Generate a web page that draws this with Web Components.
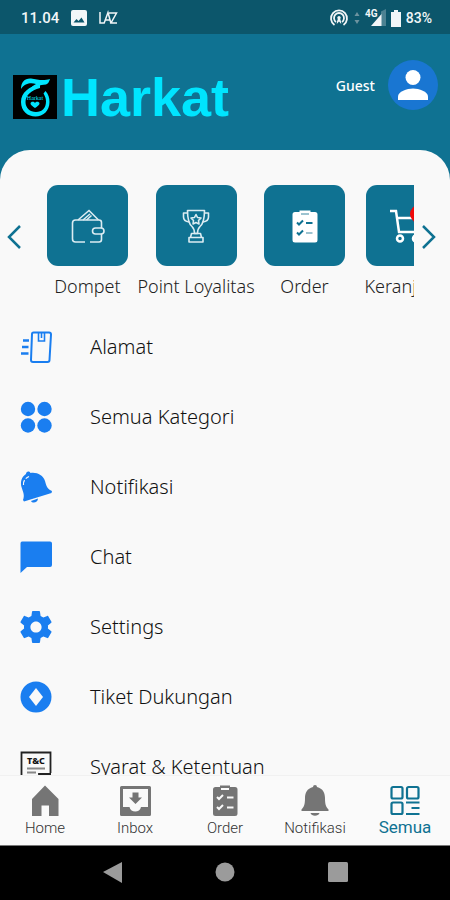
<!DOCTYPE html>
<html lang="id">
<head>
<meta charset="utf-8">
<meta name="viewport" content="width=device-width, initial-scale=1">
<title>Harkat</title>
<style>
  html, body {
    height: 100%;
    margin: 0;
  }
  body {
    font-family: "Noto Sans", "Open Sans", sans-serif;
    color: #222;
    background: #000;
  }
</style>
</head>
<body>

<harkat-app></harkat-app>

<template id="app-tpl">
  <style>
    :host {
      display: flex;
      flex-direction: column;
      height: 100vh;
      overflow: hidden;
      background: #0f7292;
    }
    main {
      flex: 1;
      min-height: 0;
      overflow: hidden;
      padding-top: 35px;
      border-radius: 30px 30px 0 0;
      background: #f9f9f9;
    }
    nav.list {
      display: flex;
      flex-direction: column;
      margin-top: 14px;
    }
  </style>
  <status-bar></status-bar>
  <app-header user="Guest">Harkat</app-header>
  <main>
    <tile-carousel>
      <tile-button icon="wallet">Dompet</tile-button>
      <tile-button icon="trophy">Point Loyalitas</tile-button>
      <tile-button icon="order">Order</tile-button>
      <tile-button icon="cart" badge>Keranjang</tile-button>
    </tile-carousel>
    <nav class="list">
      <menu-row icon="parcel">Alamat</menu-row>
      <menu-row icon="dots">Semua Kategori</menu-row>
      <menu-row icon="ring">Notifikasi</menu-row>
      <menu-row icon="chat">Chat</menu-row>
      <menu-row icon="gear">Settings</menu-row>
      <menu-row icon="ticket">Tiket Dukungan</menu-row>
      <menu-row icon="terms">Syarat &amp; Ketentuan</menu-row>
    </nav>
  </main>
  <tab-bar>
    <tab-item icon="home">Home</tab-item>
    <tab-item icon="inbox">Inbox</tab-item>
    <tab-item icon="tasks">Order</tab-item>
    <tab-item icon="bell">Notifikasi</tab-item>
    <tab-item icon="grid" active>Semua</tab-item>
  </tab-bar>
  <system-bar></system-bar>
</template>

<template id="status-tpl">
  <style>
    :host {
      display: flex;
      align-items: center;
      justify-content: space-between;
      box-sizing: border-box;
      height: 34px;
      padding: 2px 18px 0 21px;
      background: #0c566b;
      color: #f2f6f8;
      font: 500 15px Roboto, sans-serif;
    }
    div {
      display: flex;
      align-items: center;
    }
    .left { gap: 12px; }
    .right { gap: 5px; font-size: 14px; }
  </style>
  <div class="left">
    <span>11.04</span>
    <ui-icon name="image" size="16"></ui-icon>
    <ui-icon name="carrier" size="20"></ui-icon>
  </div>
  <div class="right">
    <ui-icon name="hotspot" size="18"></ui-icon>
    <ui-icon name="updown" size="8"></ui-icon>
    <ui-icon name="signal" size="20"></ui-icon>
    <ui-icon name="battery" size="10"></ui-icon>
    <span>83%</span>
  </div>
</template>

<template id="header-tpl">
  <style>
    :host {
      display: flex;
      align-items: center;
      justify-content: space-between;
      box-sizing: border-box;
      height: 116px;
      padding: 0 12px 14px 13px;
    }
    h1 {
      display: flex;
      align-items: center;
      gap: 4px;
      margin: 24px 0 0;
      color: #00e5ff;
      font: bold 54px/56px "Liberation Sans", Arial, sans-serif;
    }
    button {
      display: flex;
      align-items: center;
      gap: 13px;
      padding: 0;
      border: 0;
      background: none;
      color: #fff;
      font: 500 14px "Noto Sans", sans-serif;
    }
  </style>
  <h1><ui-icon name="logo" size="44"></ui-icon><slot></slot></h1>
  <button type="button"><span id="user"></span><ui-icon name="avatar" size="50"></ui-icon></button>
</template>

<template id="carousel-tpl">
  <style>
    :host {
      display: flex;
      align-items: center;
    }
    button {
      flex: none;
      width: 28px;
      height: 30px;
      margin-bottom: 8px;
      padding: 0;
      border: 0;
      background: none;
      color: #0f7292;
    }
    .prev { margin-right: 19px; }
    .next { margin-right: 8px; }
    .track {
      flex: 1;
      min-width: 0;
      display: grid;
      grid-template-columns: 81px 116px 81px 102px;
      gap: 10px;
      justify-items: center;
      overflow: hidden;
    }
  </style>
  <button class="prev" type="button" aria-label="Sebelumnya"><ui-icon name="prev" size="28"></ui-icon></button>
  <div class="track"><slot></slot></div>
  <button class="next" type="button" aria-label="Berikutnya"><ui-icon name="next" size="28"></ui-icon></button>
</template>

<template id="tile-tpl">
  <style>
    :host {
      display: block;
    }
    button {
      display: flex;
      flex-direction: column;
      align-items: center;
      gap: 8px;
      padding: 0;
      border: 0;
      background: none;
      color: #222;
      font: 300 18px/24px "Noto Sans", sans-serif;
      white-space: nowrap;
    }
    .box {
      position: relative;
      display: grid;
      place-items: center;
      width: 81px;
      height: 81px;
      border-radius: 11px;
      background: #0f7292;
      color: #fff;
    }
    .badge {
      position: absolute;
      top: 20px;
      left: 44px;
      width: 18px;
      height: 18px;
      border-radius: 50%;
      background: #f00a0a;
    }
    :host(:not([badge])) .badge { display: none; }
  </style>
  <button type="button">
    <span class="box"><ui-icon size="34"></ui-icon><span class="badge"></span></span>
    <slot></slot>
  </button>
</template>

<template id="row-tpl">
  <style>
    :host {
      display: block;
    }
    a {
      display: flex;
      align-items: center;
      gap: 38px;
      height: 70px;
      padding: 0 20px;
      color: #111;
      font: 300 20px/28px "Noto Sans", sans-serif;
      text-decoration: none;
    }
    ui-icon { color: #1a7ef0; }
  </style>
  <a href="#"><ui-icon size="32"></ui-icon><slot></slot></a>
</template>

<template id="tabbar-tpl">
  <style>
    :host {
      display: grid;
      grid-template-columns: repeat(5, 1fr);
      box-sizing: border-box;
      height: 71px;
      border-top: 1px solid #f1f1f1;
      border-bottom: 1px solid #777;
      background: #fafafa;
    }
  </style>
  <slot></slot>
</template>

<template id="tab-tpl">
  <style>
    :host {
      display: block;
      color: #757575;
    }
    button {
      display: flex;
      flex-direction: column;
      align-items: center;
      width: 100%;
      padding: 9px 0 0;
      border: 0;
      background: none;
      color: inherit;
      font: 300 15px/22px Roboto, sans-serif;
    }
    span { color: #333; }
    :host([active]) { color: #0f7292; }
    :host([active]) span { color: inherit; font-size: 17px; font-weight: 400; line-height: 20px; }
  </style>
  <button type="button"><ui-icon size="32"></ui-icon><span><slot></slot></span></button>
</template>

<template id="system-tpl">
  <style>
    :host {
      display: grid;
      grid-template-columns: repeat(3, 1fr);
      place-items: center;
      height: 54px;
      padding: 0 12.5%;
      background: #000;
    }
    button {
      padding: 0;
      border: 0;
      background: none;
      color: #9b9b9b;
    }
  </style>
  <button type="button" aria-label="Kembali"><ui-icon name="sysback" size="22"></ui-icon></button>
  <button type="button" aria-label="Beranda"><ui-icon name="syshome" size="22"></ui-icon></button>
  <button type="button" aria-label="Terkini"><ui-icon name="sysrecent" size="22"></ui-icon></button>
</template>

<script>

// [viewBox, markup]
const ICONS = {
  image: ['0 0 16 16', '<rect width="16" height="16" rx="2" fill="currentColor"/><path d="M2.500 12.500l3-3.500 2 2 3-3.500 3 5z" fill="#0c566b"/>'],
  carrier: ['0 0 20 20', '<g fill="none" stroke="currentColor" stroke-width="1.500"><path d="M1 4v11h4.500M5 15.500L9 4.500l3 11M6.500 12h4.500M10 5h7.500l-5.500 10h6"/></g>'],
  hotspot: ['0 0 18 18', '<g fill="none" stroke="currentColor" stroke-width="1.800"><path d="M4.500 16a8 8 0 1 1 9 0"/><path d="M6 13a5 5 0 1 1 6 0"/></g><path d="M6.800 15c0-3 .8-4 1-5a1.700 1.700 0 1 1 2.400 0c.2 1 1 2 1 5l-2.200-2.500z" fill="currentColor"/>'],
  updown: ['0 0 8 16', '<path d="M4 2l2.500 4h-5zM4 14l2.500-4h-5z" fill="#6d939f"/>'],
  signal: ['0 0 20 18', '<path d="M15 2.500V17h5V0z" fill="#4c8292"/><path d="M5 17L15.500 5v12z" fill="currentColor"/><text x="-1" y="8" font-size="10" font-weight="700" fill="currentColor">4G</text>'],
  battery: ['0 0 10 17', '<path d="M3 0h4v2h3v15H0V2h3z" fill="currentColor"/>'],
  logo: ['0 0 44 44', '<rect width="44" height="44"/><path d="M8 14C8 7 12 3 18 3.500c6 .5 11 3 19 .5-1 3-2 5-4 5.500-6 .5-11 2-16 6.500 1-4 3-5.500 6-7-5-1.500-11-1-15 5z" fill="currentColor"/><path d="M27 9C16 11.500 8 17.500 8 27s7 14.500 14.500 14.500S36.500 36 36.500 27c0-4-1-8-4-11l-2 2.500c1.500 2.500 2.500 5 2.500 8 0 6.500-4 10.500-10 10.500s-10.500-4-10.500-10C12.500 20.500 18 15.500 27 13z" fill="currentColor"/><text x="22" y="25" font-size="6" font-weight="400" text-anchor="middle" font-family="Liberation Serif" fill="currentColor">Harkat</text><path d="M22 33c-2-1.500-4.500-3-4.500-4.500 0-2 3.500-2.500 4.500-.5 1-2 4.500-1.500 4.500.5 0 1.500-2.500 3-4.500 4.500z" fill="currentColor"/>'],
  avatar: ['0 0 50 50', '<circle cx="25" cy="25" r="25" fill="#1976d2"/><circle cx="25" cy="17.500" r="7.500" fill="#fff"/><path d="M10 40v-3.500c0-5 9-8 15-8s15 3 15 8V40z" fill="#fff"/>'],
  prev: ['0 0 28 28', '<path d="M20 3L9 14l11 11" fill="none" stroke="currentColor" stroke-width="2.500"/>'],
  next: ['0 0 28 28', '<path d="M9 3l11 11L9 25" fill="none" stroke="currentColor" stroke-width="2.500"/>'],
  wallet: ['0 0 34 34', '<g fill="none" stroke="#dcecf2" stroke-width="1.600"><path d="M14 33H4.500a3 3 0 0 1-3-3V14a3 3 0 0 1 3-3H28a2.500 2.500 0 0 1 2.500 2.500V19M30.500 25v5.500A2.500 2.500 0 0 1 28 33h-9"/><rect x="21.500" y="19" width="11.500" height="6" rx="3"/><path d="M7 11L18 1.500 27.500 11M12 11l7-6M15.500 11l5-4.500"/></g>'],
  trophy: ['0 0 34 34', '<g fill="none" stroke="#dcecf2" stroke-width="1.600" stroke-linejoin="round"><path d="M8.500 1.500h17c0 9-1 13-4.500 16-2 2-2.500 4-2.500 7h-3c0-3-.5-5-2.500-7-3.500-3-4.500-7-4.500-16z"/><path d="M8.500 4H4.500v4c0 3 2 4.500 5.500 5M25.500 4h4v4c0 3-2 4.500-5.500 5"/><path d="M12.500 24.500h9l1 4h-11zM10 28.500h14V33H10z"/><path d="M17 5.500l1.500 3 3.500.5-2.500 2.500.5 3.500-3-1.500-3 1.500.5-3.500L12 9l3.500-.5z"/></g>'],
  order: ['0 0 34 34', '<path d="M7 3h4.500V1.500h11V3H27a2.500 2.500 0 0 1 2.500 2.500v25.500A2.500 2.500 0 0 1 27 33.500H7A2.500 2.500 0 0 1 4.500 31V5.500A2.500 2.500 0 0 1 7 3z" fill="#fff"/><g fill="none" stroke="#0f7292" stroke-width="2"><path d="M9 13.500l2 2 4-4M9 23.500l2 2 4-4M18 14h6.500"/><path d="M13 5h8M18 24h6.500" stroke="#9cc3d0"/></g>'],
  cart: ['0 0 34 34', '<g fill="none" stroke="#fff" stroke-width="2.500"><path d="M1 2h6l3 21h22M8 9h25l-3 10"/><circle cx="11" cy="29.500" r="3"/><circle cx="27" cy="29.500" r="3"/></g>'],
  parcel: ['0 0 32 32', '<g fill="none" stroke="currentColor" stroke-width="2"><path d="M13.500 1.500h15.500a2 2 0 0 1 2 2L29.500 29a2 2 0 0 1-2 2H13a2 2 0 0 1-2-2L12 3a1.500 1.500 0 0 1 1.500-1.500z"/><path d="M18.500 2v8h6V2M21.500 2v5" stroke-width="1.600"/><path d="M3 9.500h6M2 16h6.500M1 22.500h7.500" stroke-width="2.500"/></g>'],
  dots: ['0 0 32 32', '<g fill="currentColor"><circle cx="8" cy="8" r="7.200"/><circle cx="24.500" cy="8" r="7.200"/><circle cx="8" cy="24.500" r="7.200"/><circle cx="24.500" cy="24.500" r="7.200"/></g>'],
  ring: ['0 0 32 32', '<path d="M6 3C6 .5 9-.5 10.500 2 17 1 23 4 25 10c1.500 6 2.500 8 7 10l-.5 2L4 30.500 3 29c2-5 0-8-1.500-13C0 11 1.500 6 6 3z" fill="currentColor"/><path d="M11 30l7-2.500c0 4-5.500 5.500-7 2.500z" fill="currentColor"/><path d="M3.500 14c-.5-4 2-7 5.500-8.500" fill="none" stroke="#f9f9f9" stroke-width="1.200" stroke-dasharray="5 2"/>'],
  chat: ['0 0 32 32', '<path d="M3 .5h27a2 2 0 0 1 2 2V24a2 2 0 0 1-2 2H7l-6.500 6V2.500A2 2 0 0 1 3 .5z" fill="currentColor"/>'],
  gear: ['2 2 20 20', '<path fill="currentColor" d="M19.430 12.980c.04-.32.07-.64.07-.98s-.03-.66-.07-.98l2.110-1.650c.19-.15.24-.42.12-.64l-2-3.460c-.12-.22-.39-.3-.61-.22l-2.490 1c-.52-.4-1.080-.73-1.690-.98l-.38-2.650C14.460 2.180 14.250 2 14 2h-4c-.25 0-.46.18-.49.42l-.38 2.650c-.61.25-1.170.59-1.690.98l-2.490-1c-.23-.09-.49 0-.61.22l-2 3.460c-.13.22-.07.49.12.64l2.110 1.650c-.04.32-.07.65-.07.98s.03.66.07.98l-2.110 1.650c-.19.15-.24.42-.12.64l2 3.460c.12.22.39.3.61.22l2.490-1c.52.4 1.080.73 1.690.98l.38 2.650c.03.24.24.42.49.42h4c.25 0 .46-.18.49-.42l.38-2.650c.61-.25 1.170-.59 1.690-.98l2.490 1c.23.09.49 0 .61-.22l2-3.460c.12-.22.07-.49-.12-.64l-2.110-1.650zM12 15.500c-1.930 0-3.500-1.570-3.500-3.500s1.570-3.500 3.500-3.500 3.500 1.570 3.500 3.500-1.570 3.500-3.500 3.500z"/>'],
  ticket: ['0 0 32 32', '<circle cx="16" cy="16" r="15.500" fill="currentColor"/><path d="M16 7l7 9-7 9-7-9z" fill="#f9f9f9"/>'],
  terms: ['0 0 32 32', '<g fill="none" stroke="#222" stroke-width="1.800"><path d="M20 31H1.500V1.500h29V22"/><path d="M7 17.500h18M7 21.500h9" stroke="#888"/><path d="M19 32v-9h12"/></g><text x="16" y="12.500" font-size="9" font-weight="800" text-anchor="middle" fill="#111">T&amp;C</text>'],
  home: ['0 0 32 32', '<path d="M16 .5L29.500 14v17H20V20.500h-7.500V31H3V14z" fill="currentColor"/>'],
  inbox: ['0 0 32 32', '<path fill-rule="evenodd" d="M2.500 1h28a1.500 1.500 0 0 1 1.500 1.500v27a1.500 1.500 0 0 1-1.500 1.500h-28A1.500 1.500 0 0 1 1 29.500v-27A1.500 1.500 0 0 1 2.500 1zM4 4v18h6.500c1 6 10.500 6 11.500 0h7V4z" fill="currentColor"/><path d="M13.500 7.500h6v5H23l-6.500 6.500-6.500-6.500h3.500z" fill="currentColor"/>'],
  tasks: ['0 0 32 32', '<path d="M6.500 2H11V.5h10V2h5A2.500 2.500 0 0 1 28.500 4.500v24A2.500 2.500 0 0 1 26 31H6.500A2.500 2.500 0 0 1 4 28.500v-24A2.500 2.500 0 0 1 6.500 2z" fill="currentColor"/><g fill="none" stroke="#fafafa" stroke-width="2"><path d="M8 12l2 2 4-4M8 22l2 2 4-4M18 12.500h6.500M18 22.500h6.500M12 4h8"/></g>'],
  bell: ['0 0 32 32', '<path d="M14 2a2 2 0 0 1 4 0c6 1.500 8 6 8 11 0 7 1 8.500 3.500 11.500V26h-27v-1.500C5 21.500 6 20 6 13c0-5 2-9.500 8-11zM11.500 28h9c-1 3.500-8 3.500-9 0z" fill="currentColor"/>'],
  grid: ['0 0 32 32', '<g fill="none" stroke="currentColor" stroke-width="2.200"><rect x="2.500" y="2" width="11" height="11.500" rx="1.500"/><rect x="18" y="2" width="11.500" height="11.500" rx="1.500"/><rect x="2.500" y="17.500" width="11" height="11.500" rx="1.500"/><path d="M17 17.500h13.500M22.500 23h8M17 29h13.500"/></g>'],
  sysback: ['0 0 22 22', '<path d="M1 11L20 1v21z" fill="currentColor"/>'],
  syshome: ['0 0 22 22', '<circle cx="11" cy="11" r="9.500" fill="currentColor"/>'],
  sysrecent: ['0 0 22 22', '<rect x="1" y="1" width="20" height="20" rx="1.500" fill="currentColor"/>']
};

class UiIcon extends HTMLElement {
  static get observedAttributes() { return ['name']; }

  constructor() {
    super();
    this.attachShadow({mode: 'open'});
  }

  connectedCallback() { this.render(); }
  attributeChangedCallback() { this.render(); }

  render() {
    const icon = ICONS[this.getAttribute('name')];
    if (!icon) return;
    const size = this.getAttribute('size') || 24;
    this.shadowRoot.innerHTML = `
      <style>
        :host { display: inline-block; flex: none; width: ${size}px; line-height: 0; }
        svg { display: block; width: 100%; overflow: visible; }
      </style>
      <svg viewBox="${icon[0]}" aria-hidden="true">${icon[1]}</svg>`;
  }
}
customElements.define('ui-icon', UiIcon);

// Base for everything that is just a cloned template
class TemplateElement extends HTMLElement {
  constructor() {
    super();
    const template = document.getElementById(this.constructor.template);
    this.attachShadow({mode: 'open'}).appendChild(template.content.cloneNode(true));
  }
}

class IconElement extends TemplateElement {
  connectedCallback() {
    this.shadowRoot.querySelector('ui-icon').setAttribute('name', this.getAttribute('icon'));
  }
}

class StatusBar extends TemplateElement { static get template() { return 'status-tpl'; } }
class TileCarousel extends TemplateElement { static get template() { return 'carousel-tpl'; } }
class TabBar extends TemplateElement { static get template() { return 'tabbar-tpl'; } }
class SystemBar extends TemplateElement { static get template() { return 'system-tpl'; } }
class HarkatApp extends TemplateElement { static get template() { return 'app-tpl'; } }
class TileButton extends IconElement { static get template() { return 'tile-tpl'; } }
class MenuRow extends IconElement { static get template() { return 'row-tpl'; } }
class TabItem extends IconElement { static get template() { return 'tab-tpl'; } }

class AppHeader extends TemplateElement {
  static get template() { return 'header-tpl'; }

  connectedCallback() {
    this.shadowRoot.getElementById('user').textContent = this.getAttribute('user');
  }
}

customElements.define('status-bar', StatusBar);
customElements.define('app-header', AppHeader);
customElements.define('tile-carousel', TileCarousel);
customElements.define('tile-button', TileButton);
customElements.define('menu-row', MenuRow);
customElements.define('tab-bar', TabBar);
customElements.define('tab-item', TabItem);
customElements.define('system-bar', SystemBar);
customElements.define('harkat-app', HarkatApp);

</script>
</body>
</html>
